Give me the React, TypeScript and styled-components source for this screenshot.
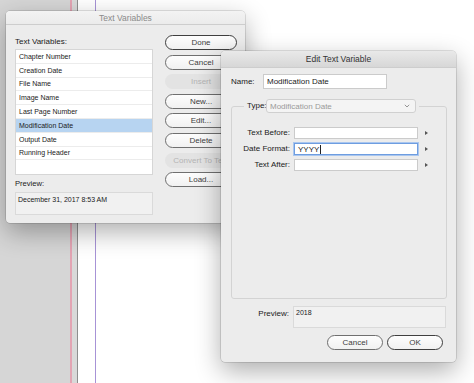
import React from 'react';
import styled, { createGlobalStyle, css } from 'styled-components';

const GlobalStyle = createGlobalStyle`
  html, body {
    margin: 0;
    padding: 0;
  }
  body {
    font-family: "Liberation Sans", Arial, sans-serif;
  }
`;

// ---------- desktop / InDesign pasteboard behind the dialogs ----------

const Desktop = styled.div`
  position: relative;
  width: 474px;
  height: 383px;
  overflow: hidden;
  display: flex;
  background-color: #d6d6d6;
`;

const Pasteboard = styled.div`
  flex: 0 0 70px;
  background-color: #d6d6d6;
`;

interface IStripeProps {
  $width: number;
  $color: string;
}

const Stripe = styled.div<IStripeProps>`
  flex: 0 0 ${({ $width }) => $width}px;
  background-color: ${({ $color }) => $color};
`;

const Page = styled.div`
  flex: 1 1 auto;
  display: flex;
  background-color: #ffffff;
  padding-left: 17px;
`;

const MarginGuide = styled.div`
  width: 1px;
  background-color: #a793d6;
`;

// ---------- windows ----------

interface IWindowProps {
  $left: number;
  $top: number;
  $width: number;
  $height: number;
}

const Window = styled.div<IWindowProps>`
  position: absolute;
  left: ${({ $left }) => $left}px;
  top: ${({ $top }) => $top}px;
  width: ${({ $width }) => $width}px;
  height: ${({ $height }) => $height}px;
  background: #ececec;
  border-radius: 4px;
  box-shadow:
    0 0 0 0.5px rgba(0, 0, 0, 0.22),
    0 9px 26px rgba(0, 0, 0, 0.32);
  display: flex;
  flex-direction: column;
  overflow: hidden;
`;

const TitleBar = styled.div<{ $active?: boolean; $h: number }>`
  height: ${({ $h }) => $h}px;
  flex: none;
  display: flex;
  align-items: center;
  justify-content: center;
  font-size: 8.5px;
  border-bottom: 1px solid #cdcdcd;
  box-sizing: border-box;
  ${({ $active }) =>
    $active
      ? css`
          background: linear-gradient(#e9e9e9, #d7d7d7);
          color: #333;
        `
      : css`
          background: linear-gradient(#f3f3f3, #ebebeb);
          color: #8a8a8a;
        `}
`;

// ---------- Text Variables dialog ----------

const TVBody = styled.div`
  flex: 1;
  display: grid;
  grid-template-columns: 138px 72px;
  column-gap: 12px;
  padding: 10px 8px 9px 9px;
`;

const LeftColumn = styled.div`
  display: flex;
  flex-direction: column;
  padding-top: 2px;
`;

const Label = styled.div`
  font-size: 8px;
  line-height: 10px;
  color: #1a1a1a;
  white-space: nowrap;
`;

const VariableList = styled.div`
  margin-top: 2px;
  background: #ffffff;
  border: 1px solid #d6d6d6;
  display: flex;
  flex-direction: column;
`;

const ListRow = styled.div<{ $selected?: boolean }>`
  height: 13.8px;
  box-sizing: border-box;
  border-bottom: 1px solid #ececec;
  padding-left: 3px;
  display: flex;
  align-items: center;
  font-size: 7px;
  color: #1a1a1a;
  background: ${({ $selected }) => ($selected ? '#b7d4f1' : 'transparent')};
  &:last-child {
    border-bottom: none;
  }
`;

const PreviewLabel = styled(Label)`
  margin-top: 4px;
  font-size: 7.6px;
`;

const PreviewBox = styled.div<{ $h: number }>`
  margin-top: 3px;
  height: ${({ $h }) => $h}px;
  box-sizing: border-box;
  border: 1px solid #dadada;
  background: #f1f1f1;
  padding: 3px 2px;
  font-size: 7px;
  color: #1a1a1a;
  white-space: nowrap;
`;

const ButtonColumn = styled.div`
  display: flex;
  flex-direction: column;
  gap: 4.6px;
`;

interface IPillButtonProps {
  $primary?: boolean;
  $disabled?: boolean;
  $w?: number;
}

const PillButton = styled.div<IPillButtonProps>`
  height: 15px;
  width: ${({ $w }) => ($w ? `${$w}px` : '100%')};
  box-sizing: border-box;
  border-radius: 8px;
  display: flex;
  align-items: center;
  justify-content: center;
  font-size: 8px;
  white-space: nowrap;
  overflow: hidden;
  ${({ $primary, $disabled }) =>
    $disabled
      ? css`
          background: #e3e3e3;
          color: #b4b4b4;
          border: none;
        `
      : css`
          background: linear-gradient(#fdfdfd, #f1f1f1);
          color: #404040;
          border: ${$primary ? '1.3px solid #3f3f3f' : '1px solid #6f6f6f'};
        `}
`;

// ---------- Edit Text Variable dialog ----------

const EditBody = styled.div`
  flex: 1;
  display: flex;
  flex-direction: column;
  padding: 6px 9px 11px 10px;
`;

const NameRow = styled.div`
  display: flex;
  align-items: center;
  height: 15px;
`;

const NameLabel = styled(Label)`
  width: 32px;
`;

const TextInput = styled.div<{ $w: number; $h: number; $focused?: boolean }>`
  width: ${({ $w }) => $w}px;
  height: ${({ $h }) => $h}px;
  box-sizing: border-box;
  background: #ffffff;
  border: 1px solid ${({ $focused }) => ($focused ? '#6e9de0' : '#cbcbcb')};
  box-shadow: ${({ $focused }) => ($focused ? '0 0 0 1px #a9c6ef' : 'none')};
  display: flex;
  align-items: center;
  padding-left: 3px;
  font-size: 8px;
  color: #1a1a1a;
  white-space: nowrap;
`;

const Caret = styled.span`
  display: inline-block;
  width: 1px;
  height: 9px;
  background: #222;
  margin-left: 0.5px;
`;

const GroupBox = styled.fieldset`
  margin: 10px 0 0 0;
  padding: 14px 0 0 0;
  height: 200px;
  box-sizing: border-box;
  border: 1px solid #d3d3d3;
  border-radius: 3px;
  min-inline-size: 0;
`;

const GroupLegend = styled.legend`
  margin-left: 12px;
  padding: 0 3px;
  display: flex;
  align-items: center;
  height: 14px;
`;

const TypeLabel = styled(Label)`
  width: 17px;
  margin-right: 2px;
`;

const PopupButton = styled.div`
  width: 150px;
  height: 14px;
  box-sizing: border-box;
  border: 1px solid #d0d0d0;
  border-radius: 3px;
  background: #f4f4f4;
  display: flex;
  align-items: center;
  justify-content: space-between;
  padding: 0 5px 0 3px;
  font-size: 8px;
  color: #9a9a9a;
`;

const FieldGrid = styled.div`
  display: grid;
  grid-template-columns: 58px 124px 10px;
  column-gap: 4px;
  row-gap: 4px;
  align-items: center;
`;

const FieldLabel = styled(Label)`
  text-align: right;
`;

const MenuArrow = styled.span`
  width: 0;
  height: 0;
  margin-left: 3px;
  border-top: 2.5px solid transparent;
  border-bottom: 2.5px solid transparent;
  border-left: 3.5px solid #555;
`;

const PreviewRow = styled.div`
  margin-top: 7px;
  display: grid;
  grid-template-columns: 58px 153px;
  column-gap: 4px;
  align-items: start;
`;

const PreviewRowLabel = styled(FieldLabel)`
  padding-top: 3px;
`;

const EditPreview = styled(PreviewBox)`
  margin-top: 0;
  padding: 2px 2px;
`;

const ButtonRow = styled.div`
  margin-top: 7px;
  display: flex;
  justify-content: flex-end;
  gap: 4px;
  padding-right: 4px;
`;

const variables = [
  'Chapter Number',
  'Creation Date',
  'File Name',
  'Image Name',
  'Last Page Number',
  'Modification Date',
  'Output Date',
  'Running Header',
];

const sideButtons = [
  { label: 'Done', primary: true },
  { label: 'Cancel' },
  { label: 'Insert', disabled: true },
  { label: 'New...' },
  { label: 'Edit...' },
  { label: 'Delete' },
  { label: 'Convert To Text', disabled: true },
  { label: 'Load...' },
];

const Chevron: React.FC = () => (
  <svg width="6" height="4" viewBox="0 0 6 4">
    <path d="M0.8 0.8 L3 3 L5.2 0.8" fill="none" stroke="#8a8a8a" strokeWidth="0.9" />
  </svg>
);

const App: React.FC = () => {
  return (
    <>
      <GlobalStyle />
      <Desktop>
        <Pasteboard />
        <Stripe $width={1.5} $color="#e3a4b3" />
        <Stripe $width={5.5} $color="#d9d9d9" />
        <Stripe $width={1} $color="#8e8e8e" />
        <Page>
          <MarginGuide />
        </Page>

        <Window $left={6} $top={11} $width={239} $height={212}>
          <TitleBar $h={14}>Text Variables</TitleBar>
          <TVBody>
            <LeftColumn>
              <Label>Text Variables:</Label>
              <VariableList>
                {variables.map((name) => (
                  <ListRow key={name} $selected={name === 'Modification Date'}>
                    {name}
                  </ListRow>
                ))}
                <ListRow />
              </VariableList>
              <PreviewLabel>Preview:</PreviewLabel>
              <PreviewBox $h={23}>December 31, 2017 8:53 AM</PreviewBox>
            </LeftColumn>
            <ButtonColumn>
              {sideButtons.map((b) => (
                <PillButton key={b.label} $primary={b.primary} $disabled={b.disabled}>
                  {b.label}
                </PillButton>
              ))}
            </ButtonColumn>
          </TVBody>
        </Window>

        <Window $left={221} $top={51} $width={235} $height={311}>
          <TitleBar $h={17} $active>
            Edit Text Variable
          </TitleBar>
          <EditBody>
            <NameRow>
              <NameLabel>Name:</NameLabel>
              <TextInput $w={124} $h={15}>
                Modification Date
              </TextInput>
            </NameRow>

            <GroupBox>
              <GroupLegend>
                <TypeLabel>Type:</TypeLabel>
                <PopupButton>
                  Modification Date
                  <Chevron />
                </PopupButton>
              </GroupLegend>
              <FieldGrid>
                <FieldLabel>Text Before:</FieldLabel>
                <TextInput $w={124} $h={12} />
                <MenuArrow />
                <FieldLabel>Date Format:</FieldLabel>
                <TextInput $w={124} $h={12} $focused>
                  YYYY
                  <Caret />
                </TextInput>
                <MenuArrow />
                <FieldLabel>Text After:</FieldLabel>
                <TextInput $w={124} $h={12} />
                <MenuArrow />
              </FieldGrid>
            </GroupBox>

            <PreviewRow>
              <PreviewRowLabel>Preview:</PreviewRowLabel>
              <EditPreview $h={22}>2018</EditPreview>
            </PreviewRow>

            <ButtonRow>
              <PillButton $w={56}>Cancel</PillButton>
              <PillButton $w={56} $primary>
                OK
              </PillButton>
            </ButtonRow>
          </EditBody>
        </Window>
      </Desktop>
    </>
  );
};

export default App;
